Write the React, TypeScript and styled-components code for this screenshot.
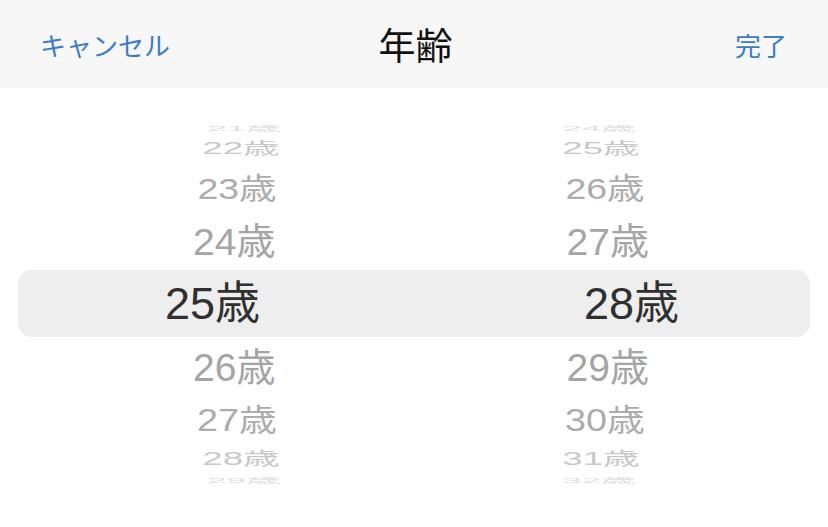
import React from "react";
import styled, { createGlobalStyle } from "styled-components";

const GlobalStyle = createGlobalStyle`
  html, body { margin: 0; padding: 0; background: #ffffff; }
  body { width: 828px; height: 527px; overflow: hidden; }
`;

const Screen = styled.div`
  width: 828px;
  height: 527px;
  display: flex;
  flex-direction: column;
  background: #ffffff;
  font-family: "Noto Sans CJK JP", sans-serif;
`;

const Header = styled.header`
  height: 88px;
  background: #f7f7f7;
  display: grid;
  grid-template-columns: 1fr auto 1fr;
  align-items: center;
  padding: 0 41px 0 40px;
`;

const HeaderButton = styled.button<{ $align: "start" | "end" }>`
  justify-self: ${(p) => p.$align};
  border: none;
  background: none;
  padding: 0;
  margin-top: 1px;
  font-family: "Noto Sans CJK JP", sans-serif;
  font-size: 26px;
  line-height: 1;
  color: #3a7cc6;
  cursor: pointer;
`;

const Title = styled.h1`
  margin: 0;
  font-family: "Noto Sans CJK JP", sans-serif;
  font-weight: 400;
  font-size: 37px;
  line-height: 1;
  color: #111111;
  transform: translateX(2px);
`;

const Picker = styled.div`
  padding-top: 35px;
  display: flex;
  flex-direction: column;
`;

const Row = styled.div<{ $h: number; $spread: number }>`
  height: ${(p) => p.$h}px;
  display: flex;
  justify-content: center;
  align-items: center;
  padding-left: 14px;
  gap: ${(p) => p.$spread - 120}px;
`;

const Cell = styled.span<{ $sx: number; $sy: number; $color: string }>`
  width: 120px;
  display: block;
  text-align: center;
  white-space: nowrap;
  font-family: "Liberation Sans", "Noto Sans CJK JP", sans-serif;
  font-size: 39px;
  line-height: 1;
  color: ${(p) => p.$color};
  transform: scale(${(p) => p.$sx}, ${(p) => p.$sy});
`;

const Band = styled.div`
  height: 67px;
  margin: 0 18px;
  border-radius: 14px;
  background: #eeeeee;
  display: flex;
  justify-content: center;
  align-items: center;
  padding-left: 16px;
  gap: 289px;
`;

const SelectedCell = styled.span`
  width: 130px;
  display: block;
  text-align: center;
  white-space: nowrap;
  font-family: "Liberation Sans", "Noto Sans CJK JP", sans-serif;
  font-size: 45px;
  line-height: 1;
  color: #303030;
  margin-top: -1px;
`;

type RowSpec = { k: number; h: number; sx: number; sy: number; color: string; spread: number };

const topRows: RowSpec[] = [
  { k: -4, h: 11, sx: 0.9, sy: 0.18, color: "#dedede", spread: 355 },
  { k: -3, h: 28, sx: 0.94, sy: 0.4, color: "#c8c8c8", spread: 360 },
  { k: -2, h: 52, sx: 0.96, sy: 0.76, color: "#acacac", spread: 368 },
  { k: -1, h: 56, sx: 1, sy: 0.96, color: "#a5a5a5", spread: 373.5 },
];

const bottomRows: RowSpec[] = [
  { k: 1, h: 60, sx: 1, sy: 0.98, color: "#a5a5a5", spread: 373.5 },
  { k: 2, h: 46, sx: 0.97, sy: 0.8, color: "#acacac", spread: 368 },
  { k: 3, h: 31, sx: 0.94, sy: 0.46, color: "#c8c8c8", spread: 360 },
  { k: 4, h: 12, sx: 0.9, sy: 0.18, color: "#dedede", spread: 355 },
];

const LEFT = 25;
const RIGHT = 28;

const WheelRow: React.FC<{ spec: RowSpec }> = ({ spec }) => (
  <Row $h={spec.h} $spread={spec.spread}>
    <Cell $sx={spec.sx} $sy={spec.sy} $color={spec.color}>
      {LEFT + spec.k}歳
    </Cell>
    <Cell $sx={spec.sx} $sy={spec.sy} $color={spec.color}>
      {RIGHT + spec.k}歳
    </Cell>
  </Row>
);

export default function App() {
  return (
    <>
      <GlobalStyle />
      <Screen>
        <Header>
          <HeaderButton $align="start">キャンセル</HeaderButton>
          <Title>年齢</Title>
          <HeaderButton $align="end">完了</HeaderButton>
        </Header>
        <Picker>
          {topRows.map((r) => (
            <WheelRow key={r.k} spec={r} />
          ))}
          <Band>
            <SelectedCell>{LEFT}歳</SelectedCell>
            <SelectedCell>{RIGHT}歳</SelectedCell>
          </Band>
          {bottomRows.map((r) => (
            <WheelRow key={r.k} spec={r} />
          ))}
        </Picker>
      </Screen>
    </>
  );
}
